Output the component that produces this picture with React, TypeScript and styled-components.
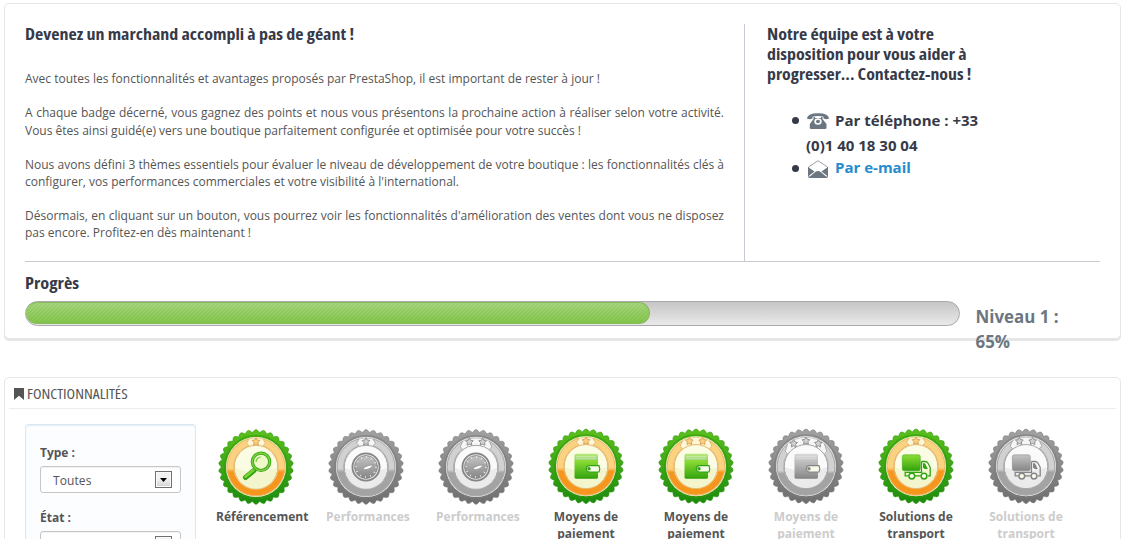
import React from "react";
import styled, { createGlobalStyle } from "styled-components";

const Global = createGlobalStyle`
  * { box-sizing: border-box; }
  html, body { margin: 0; background: #fff; }
  body { font-family: "Open Sans", "Noto Sans", sans-serif; font-size: 12px; line-height: 17.14px; color: #555; }
`;

const Page = styled.div`
  height: 539px;
  padding: 3px 5px 0 4px;
  overflow: hidden;
`;

const Panel = styled.section`
  background: #fff;
  border: 1px solid #e6e6e6;
  border-radius: 5px;
`;

const AdvicePanel = styled(Panel)`
  height: 336px;
  padding: 20px 20px 0;
  box-shadow: 0 2px 0 #e6e6e6;
  margin-bottom: 38px;
`;

const Intro = styled.div`
  display: flex;
  height: 238px;
  border-bottom: 1px solid #c9c9d3;
`;

const Story = styled.div`
  width: 720px;
  padding-right: 20px;
  border-right: 1px solid #c9c9d3;
`;

const Contact = styled.div`
  padding-left: 22px;
`;

const Title = styled.h2`
  margin: 0;
  font-family: "Open Sans", sans-serif;
  font-stretch: 75%;
  font-weight: 700;
  font-size: 16.8px;
  line-height: 20px;
  color: #363a48;
`;

const Narrow = styled.span<{ $scale: number }>`
  display: block;
  width: max-content;
  white-space: nowrap;
  transform: scaleX(${(p) => p.$scale});
  transform-origin: left center;
`;

const Paragraphs = styled.div`
  width: 699px;
  margin-top: 26.3px;
`;

const Paragraph = styled.p`
  margin: 0 0 17.1px;
  line-height: 17.1px;
`;

const Line = styled.span<{ $width: number }>`
  display: block;
  width: ${(p) => p.$width}px;
  white-space: nowrap;
  text-align: justify;
  text-align-last: justify;
`;

const ContactList = styled.ul`
  list-style: none;
  margin: 24px 0 0;
  padding: 0 0 0 25px;
  font-size: 15px;
  font-weight: 700;
  color: #363a48;
`;

const ContactItem = styled.li<{ $h: number }>`
  display: flex;
  align-items: center;
  height: ${(p) => p.$h}px;
  white-space: nowrap;
`;

const Bullet = styled.i`
  width: 7px;
  height: 7px;
  border-radius: 50%;
  background: #363a48;
  margin-right: 7px;
`;

const IconSlot = styled.span`
  width: 29px;
  height: 18px;
  svg { display: block; }
`;

const Continuation = styled.span`
  padding-left: 14px;
`;

const MailLink = styled.a`
  color: #268ccd;
`;

const ProgressTitle = styled(Title)`
  margin: 11px 0 8px;
`;

const ProgressRow = styled.div`
  display: flex;
  align-items: flex-start;
`;

const Track = styled.div`
  width: 935px;
  height: 25px;
  border: 1px solid #a9a9a9;
  border-radius: 13px;
  background: linear-gradient(#c6c6c6, #e9e9e9);
`;

const Fill = styled.div`
  height: 22px;
  border-radius: 12px;
  border: 1px solid #86ba5c;
  border-left: 0;
  background:
    repeating-linear-gradient(135deg, rgba(60, 120, 20, 0.13) 0 1px, rgba(255, 255, 255, 0) 1px 2.83px),
    linear-gradient(#a6d47c, #84c64b);
`;

const Level = styled.div`
  width: 95px;
  margin: 3px 0 0 15.5px;
  font-size: 16.9px;
  line-height: 25px;
  font-weight: 700;
  color: #6c7680;
`;

const FeaturePanel = styled(Panel)`
  height: 200px;
  padding: 0 4px;
`;

const PanelHead = styled.header`
  display: flex;
  align-items: center;
  height: 31px;
  padding-left: 5px;
  border-bottom: 1px solid #ececec;
  gap: 3px;
  > svg { margin-top: 2px; }
`;

const PanelTitle = styled.h3`
  margin: 2px 0 0;
  font-family: "Open Sans", sans-serif;
  font-stretch: 75%;
  font-weight: 400;
  font-size: 14px;
  color: #555;
`;

const PanelBody = styled.div`
  display: flex;
  padding: 15px 0 0 16px;
`;

const Filters = styled.form`
  width: 171px;
  height: 160px;
  padding: 19px 14px;
  border: 1px solid #dce8f0;
  border-radius: 3px;
  background: #fbfdff;
  box-shadow: inset 0 1px 1px #e3edf5;
`;

const FilterLabel = styled.label`
  display: block;
  height: 17px;
  margin-bottom: 5px;
  font-weight: 700;
`;

const SelectBox = styled.div`
  display: flex;
  justify-content: space-between;
  align-items: center;
  width: 141px;
  height: 27px;
  margin-bottom: 16px;
  padding: 0 8px 0 12px;
  border: 1px solid #c7c7c7;
  border-radius: 3px;
  background: #fff;
  box-shadow: inset 0 1px 1px rgba(0, 0, 0, 0.06);
  letter-spacing: 0.1px;
`;

const SelectValue = styled.span`
  padding-top: 2px;
`;

const Arrow = styled.span`
  display: flex;
  align-items: center;
  justify-content: center;
  width: 17px;
  height: 17px;
  border: 1px solid #707070;
  background: linear-gradient(#f2f2f2 45%, #d2d2d2);
  box-shadow: inset 0 0 0 1px #fafafa;
`;

const BadgeList = styled.ul`
  display: grid;
  grid-template-columns: repeat(8, 80px);
  column-gap: 30px;
  list-style: none;
  margin: 4px 0 0 20px;
  padding: 0;
`;

const BadgeItem = styled.li<{ $off: boolean; $drop: boolean }>`
  display: flex;
  flex-direction: column;
  align-items: flex-start;
  color: ${(p) => (p.$off ? "#ccc" : "#555")};
  font-weight: 700;
  text-align: center;
  svg { display: block; width: 80px; height: 78px; transform: translateY(${(p) => (p.$drop ? 1 : 0.3)}px); }
`;

const BadgeName = styled.span`
  min-width: 80px;
  margin-top: 2px;
`;

const teethPath = (() => {
  const n = 30;
  let d = "";
  for (let i = 0; i < n; i++) {
    const at = (k: number, r: number) => {
      const a = ((i + k) / n) * Math.PI * 2 - Math.PI / 2;
      return `${(r * Math.cos(a)).toFixed(2)} ${(r * Math.sin(a)).toFixed(2)}`;
    };
    d += `${i ? "L" : "M"}${at(-0.5, 34.6)}L${at(-0.22, 36.6)}Q${at(0, 38.2)} ${at(0.22, 36.6)}`;
  }
  return d + "Z";
})();

const starPoints = Array.from({ length: 10 }, (_, i) => {
  const r = i % 2 ? 2.1 : 4;
  const a = (i / 10) * Math.PI * 2 - Math.PI / 2;
  return `${(r * Math.cos(a)).toFixed(2)},${(r * Math.sin(a)).toFixed(2)}`;
}).join(" ");

type Kind = "search" | "gauge" | "wallet" | "truck";

const starLayout: Record<number, number[][]> = {
  1: [[0, -25.3]],
  2: [[-6.6, -25], [6.6, -25]],
  3: [[-12.3, -22.6], [0, -25.3], [12.3, -22.6]],
};

const Glyph = ({ kind, g, dark }: { kind: Kind; g: string; dark: string }) => {
  if (kind === "search")
    return (
      <g>
        <path d="M-2 3.5L-10.5 10.5" stroke={dark} strokeWidth="5" strokeLinecap="round" />
        <path d="M-2.5 3L-10.5 9.7" stroke={g} strokeWidth="2.6" strokeLinecap="round" />
        <circle cx="5" cy="-5.200" r="8.700" fill="#eff8c9" stroke={dark} strokeWidth="3.200" />
        <circle cx="5" cy="-5.200" r="8.700" fill="none" stroke="#7ed03c" strokeWidth="1.600" />
        <path d="M0 -5A5 5 0 0 1 5 -10" fill="none" stroke="#72c93c" strokeWidth="1.2" />
      </g>
    );
  if (kind === "gauge")
    return (
      <g>
        <circle r="13.600" fill="#e2e2e2" stroke="#858585" strokeWidth="1.800" />
        <circle r="11.400" fill={g} stroke="#828282" strokeWidth=".8" />
        <circle r="10" fill="none" stroke="#f4f4f4" strokeWidth="1.800" strokeDasharray=".8 4.436" />
        <path d="M-2.800 1.800Q-1-1.300 7.500-2.200Q4 2.800 0 2.600Q-2.300 3.100-2.800 1.800Z" fill="#fff" stroke="#777" strokeWidth=".6" />
      </g>
    );
  if (kind === "wallet")
    return (
      <g>
        <rect x="-11.5" y="-12.500" width="23.5" height="9" rx="1.5" fill={g} opacity=".6" />
        <path d="M-10-9.500H10.500M-10-7.500H10.500" stroke="#fff" strokeOpacity=".45" />
        <rect x="-11.5" y="-6" width="23.5" height="18.5" rx="1.8" fill={g} />
        <path d="M-11.500 11.500H12" stroke={dark} strokeOpacity=".5" />
        <path d="M13-.7H3.500A3.100 3.100 0 0 0 3.500 5.700H13Q14.500 2.500 13-.7Z" fill="#f8fbea" stroke={dark} strokeWidth="1.2" />
        <circle cx="3" cy="2.500" r="1.700" fill={dark} />
      </g>
    );
  return (
    <g>
      <rect x="-13.700" y="-11.500" width="18" height="16" rx="2" fill={g} stroke={dark} strokeWidth=".5" />
      <path d="M5.500-4.800H9Q11-4.800 12 -3L14.200 1V9.500H12M-7.500 9.500H-10.800V6H5.500V-4.800M-1 9.500H4.500" fill="none" stroke={dark} strokeWidth="1.300" />
      <path d="M7-3H9L11.800 2.800Q8 3.500 7 1Z" fill={dark} />
      <circle cx="-4.200" cy="9.800" r="2.900" fill="#fbfced" stroke={dark} strokeWidth="1.500" />
      <circle cx="8" cy="9.800" r="2.900" fill="#fbfced" stroke={dark} strokeWidth="1.500" />
    </g>
  );
};

const Badge = ({ kind, stars, off, id }: { kind: Kind; stars: number; off: boolean; id: string }) => {
  const c = off
    ? { a: "#a2a2a2", b: "#6e6e6e", edge: "#7b7b7b", cream: "#f6f6f6", hi: "#d1d1d1", lo: "#a3a3a3", line: "#a5a5a5", face: "#fafafa", face2: "#ebebeb", g1: "#c4c4c4", g2: "#868686", dark: "#858585" }
    : { a: "#5cc01c", b: "#1d8a10", edge: "#2f990b", cream: "#fdf7da", hi: "#fbd27f", lo: "#f7961d", line: "#e5b76c", face: "#fbfce4", face2: "#f3f6cc", g1: "#8ede35", g2: "#31a20c", dark: "#31a315" };
  const gap = stars === 1 ? 7 : stars === 2 ? 13.5 : 18.5;
  const out = (x: number, r: number) => -Math.sqrt(r * r - x * x);
  const y1 = out(gap, 28.8);
  const y2 = out(gap, 22.4);
  const xm = gap + 2.4;
  const ym = out(xm, 25.6);
  return (
    <svg viewBox="-40 -38 80 78" aria-hidden="true">
      <defs>
        <linearGradient id={`${id}r`} x2="0" y2="1"><stop stopColor={c.a} /><stop offset="1" stopColor={c.b} /></linearGradient>
        <linearGradient id={`${id}g`} x2="0" y2="1"><stop stopColor={c.g1} /><stop offset="1" stopColor={c.g2} /></linearGradient>
        <linearGradient id={`${id}o`} x2="0" y2="1"><stop stopColor={c.hi} /><stop offset=".52" stopColor={c.hi} /><stop offset=".58" stopColor={c.lo} /><stop offset="1" stopColor={c.lo} /></linearGradient>
      </defs>
      <path d={teethPath} fill={`url(#${id}r)`} stroke={c.edge} strokeWidth=".6" />
      <circle r="31.200" fill="none" stroke={c.edge} strokeOpacity=".6" strokeWidth="1.5" />
      <circle r="30" fill={c.cream} />
      <circle r="29" fill="none" stroke={c.line} strokeWidth=".6" />
      <path
        d={`M${gap} ${y1}A28.800 28.800 0 1 1 ${-gap} ${y1}L${-xm} ${ym}L${-gap} ${y2}A22.400 22.400 0 1 0 ${gap} ${y2}L${xm} ${ym}Z`}
        fill={`url(#${id}o)`}
        stroke={c.line}
        strokeWidth=".9"
      />
      <circle r="21.700" fill={c.cream} stroke={c.line} strokeWidth="1" />
      <circle r="20.800" fill={c.face} />
      <path d="M-20.800 1Q0 9 20.800 1A20.800 20.800 0 0 1-20.800 1Z" fill={c.face2} />
      {starLayout[stars].map(([x, y]) => (
        <polygon key={x} points={starPoints} transform={`translate(${x} ${y})`} fill={c.hi} stroke={off ? "#929292" : "#dfa255"} strokeWidth="1" strokeLinejoin="round" />
      ))}
      <Glyph kind={kind} g={kind === "search" ? "#7cd334" : `url(#${id}g)`} dark={c.dark} />
    </svg>
  );
};

const badges: { name: string[]; kind: Kind; stars: number; off: boolean }[] = [
  { name: ["Référencement"], kind: "search", stars: 1, off: false },
  { name: ["Performances"], kind: "gauge", stars: 1, off: true },
  { name: ["Performances"], kind: "gauge", stars: 2, off: true },
  { name: ["Moyens de", "paiement"], kind: "wallet", stars: 1, off: false },
  { name: ["Moyens de", "paiement"], kind: "wallet", stars: 2, off: false },
  { name: ["Moyens de", "paiement"], kind: "wallet", stars: 3, off: true },
  { name: ["Solutions de", "transport"], kind: "truck", stars: 1, off: false },
  { name: ["Solutions de", "transport"], kind: "truck", stars: 2, off: true },
];

const paragraphs: [string, number][][] = [
  [["Avec toutes les fonctionnalités et avantages proposés par PrestaShop, il est important de rester à jour !", 575]],
  [
    ["A chaque badge décerné, vous gagnez des points et nous vous présentons la prochaine action à réaliser selon votre activité.", 699],
    ["Vous êtes ainsi guidé(e) vers une boutique parfaitement configurée et optimisée pour votre succès !", 556],
  ],
  [
    ["Nous avons défini 3 thèmes essentiels pour évaluer le niveau de développement de votre boutique : les fonctionnalités clés à", 699],
    ["configurer, vos performances commerciales et votre visibilité à l'international.", 434],
  ],
  [
    ["Désormais, en cliquant sur un bouton, vous pourrez voir les fonctionnalités d'amélioration des ventes dont vous ne disposez", 699],
    ["pas encore. Profitez-en dès maintenant !", 226],
  ],
];

const PhoneIcon = () => (
  <svg width="24" height="18" viewBox="0 0 24 18" fill="#6c7680">
    <path d="M1 6.800Q.8 1.200 12 1.200T23 6.800Q20 7.800 17.500 6.500V4.800Q12 3.400 6.500 4.800V6.500Q4 7.800 1 6.800Z" />
    <path fillRule="evenodd" d="M7.500 5H9V6H15V5H16.500V7L20.500 12V15.500Q20.500 17 19 17H5Q3.800 17 3.800 15.500V12L7.500 7ZM12 6.200A3.700 3.300 0 1 0 12 12.800A3.700 3.300 0 1 0 12 6.200Z" />
    <ellipse cx="12" cy="9.500" rx="2" ry="1.700" />
  </svg>
);

const MailIcon = () => (
  <svg width="24" height="20" viewBox="0 0 24 20">
    <path d="M2.500 8L12 1.700L21.500 8V18H2.500Z" fill="#fff" stroke="#818993" strokeWidth=".8" />
    <path d="M2 8L8.500 12.500L2 17.500ZM22 8L15.500 12.500L22 17.500ZM2.200 19L9.500 12.800Q12 11.300 14.500 12.800L21.800 19Z" fill="#6c7680" />
  </svg>
);

const Select = ({ value }: { value: string }) => (
  <SelectBox>
    <SelectValue>{value}</SelectValue>
    <Arrow>
      <svg width="7" height="4" viewBox="0 0 7 4"><path d="M0 0H7L3.500 4Z" /></svg>
    </Arrow>
  </SelectBox>
);

export default function App() {
  return (
    <>
      <Global />
      <Page>
        <AdvicePanel>
          <Intro>
            <Story>
              <Title><Narrow $scale={1.072}>Devenez un marchand accompli à pas de géant !</Narrow></Title>
              <Paragraphs>
                {paragraphs.map((lines, i) => (
                  <Paragraph key={i}>
                    {lines.map(([text, width]) => <Line key={text} $width={width}>{text}</Line>)}
                  </Paragraph>
                ))}
              </Paragraphs>
            </Story>
            <Contact>
              <Title>
                <Narrow $scale={1.073}>Notre équipe est à votre</Narrow>
                <Narrow $scale={1.07}>disposition pour vous aider à</Narrow>
                <Narrow $scale={1.06}>progresser... Contactez-nous !</Narrow>
              </Title>
              <ContactList>
                <ContactItem $h={25}><Bullet /><IconSlot><PhoneIcon /></IconSlot>Par téléphone : +33</ContactItem>
                <ContactItem $h={25}><Continuation>(0)1 40 18 30 04</Continuation></ContactItem>
                <ContactItem $h={20}><Bullet /><IconSlot><MailIcon /></IconSlot><MailLink>Par e-mail</MailLink></ContactItem>
              </ContactList>
            </Contact>
          </Intro>
          <ProgressTitle><Narrow $scale={1.09}>Progrès</Narrow></ProgressTitle>
          <ProgressRow>
            <Track><Fill style={{ width: 624 }} /></Track>
            <Level>Niveau 1 : 65%</Level>
          </ProgressRow>
        </AdvicePanel>
        <FeaturePanel>
          <PanelHead>
            <svg width="10" height="12" viewBox="0 0 10 12"><path d="M0 0H10V12L5 7.800L0 12Z" fill="#555" /></svg>
            <PanelTitle><Narrow $scale={1.12}>FONCTIONNALITÉS</Narrow></PanelTitle>
          </PanelHead>
          <PanelBody>
            <Filters>
              <FilterLabel>Type :</FilterLabel>
              <Select value="Toutes" />
              <FilterLabel>État :</FilterLabel>
              <Select value="Toutes" />
            </Filters>
            <BadgeList>
              {badges.map((b, i) => (
                <BadgeItem key={i} $off={b.off} $drop={i < 3}>
                  <Badge kind={b.kind} stars={b.stars} off={b.off} id={`b${i}`} />
                  <BadgeName>{b.name.map((n) => <div key={n}>{n}</div>)}</BadgeName>
                </BadgeItem>
              ))}
            </BadgeList>
          </PanelBody>
        </FeaturePanel>
      </Page>
    </>
  );
}
